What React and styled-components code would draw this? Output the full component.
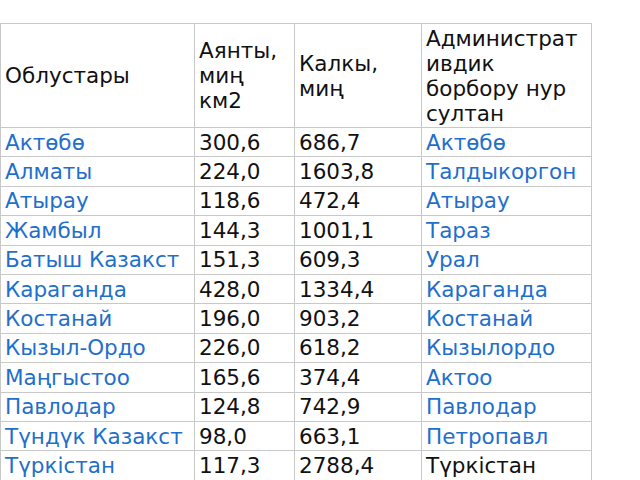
import React from 'react'
import styled, { createGlobalStyle } from 'styled-components'

const GlobalStyle = createGlobalStyle`
  body {
    margin: 0;
    background: #fff;
    font-family: "DejaVu Sans", "Noto Sans", sans-serif;
  }
`

const rows = [
  ['Актөбө', '300,6', '686,7', 'Актөбө', true],
  ['Алматы', '224,0', '1603,8', 'Талдыкоргон', true],
  ['Атырау', '118,6', '472,4', 'Атырау', true],
  ['Жамбыл', '144,3', '1001,1', 'Тараз', true],
  ['Батыш Казакст', '151,3', '609,3', 'Урал', true],
  ['Караганда', '428,0', '1334,4', 'Караганда', true],
  ['Костанай', '196,0', '903,2', 'Костанай', true],
  ['Кызыл-Ордо', '226,0', '618,2', 'Кызылордо', true],
  ['Маңгыстоо', '165,6', '374,4', 'Актоо', true],
  ['Павлодар', '124,8', '742,9', 'Павлодар', true],
  ['Түндүк Казакст', '98,0', '663,1', 'Петропавл', true],
  ['Түркістан', '117,3', '2788,4', 'Түркістан', false],
]

export default function App() {
  return (
    <Page>
      <GlobalStyle />
      <Table>
        <colgroup>
          <col style={{ width: 194 }} />
          <col style={{ width: 100 }} />
          <col style={{ width: 127 }} />
          <col style={{ width: 170 }} />
        </colgroup>
        <thead>
          <HeadRow>
            <Cell>Облустары</Cell>
            <Cell>Аянты,<br />миң<br />км2</Cell>
            <Cell>Калкы,<br />миң</Cell>
            <Cell>Администрат<br />ивдик<br />борбору нур<br />султан</Cell>
          </HeadRow>
        </thead>
        <tbody>
          {rows.map(([region, area, pop, center, linked]) => (
            <Row key={region}>
              <Cell><Link>{region}</Link></Cell>
              <Cell>{area}</Cell>
              <Cell>{pop}</Cell>
              <Cell>{linked ? <Link>{center}</Link> : center}</Cell>
            </Row>
          ))}
        </tbody>
      </Table>
    </Page>
  )
}

const Page = styled.div`
  padding-top: 23px;
  width: 640px;
  height: 480px;
  overflow: hidden;
`

const Table = styled.table`
  border-collapse: collapse;
  table-layout: fixed;
  width: 591px;
  font-size: 21.5px;
  line-height: 25px;
  color: #111;
`

const HeadRow = styled.tr`
  height: 104px;
`

const Row = styled.tr`
  height: 29.4px;
`

const Cell = styled.td`
  border: 1px solid #c8c8c8;
  padding: 0 4px;
  vertical-align: middle;
  white-space: nowrap;
  overflow: hidden;
`

const Link = styled.span`
  color: #1f6fcc;
`
